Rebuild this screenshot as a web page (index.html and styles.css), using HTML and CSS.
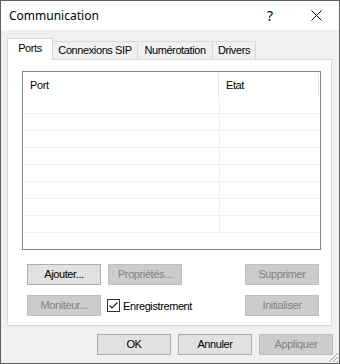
FILE: index.html
```html
<!DOCTYPE html>
<html>

<head>
    <link rel="stylesheet" href="styles.css">
</head>

<body>
    <div class="window">
        <div class="titlebar">
            <span class="title">Communication</span>
            <span class="tb-btn help">?</span>
            <span class="tb-btn close">
                <svg width="11" height="11" viewBox="0 0 11 11">
                    <path d="M0.5 0.5L10.5 10.5M10.5 0.5L0.5 10.5" stroke="#000" stroke-width="1" fill="none"/>
                </svg>
            </span>
        </div>
        <div class="content">
            <div class="tabs">
                <div class="tab active tab-ports">Ports</div>
                <div class="tab tab-sip">Connexions SIP</div>
                <div class="tab tab-num">Numérotation</div>
                <div class="tab tab-drv">Drivers</div>
            </div>
            <div class="panel">
                <div class="list">
                    <div class="list-head">
                        <div class="head-cell col-port">Port</div>
                        <div class="head-cell col-etat">Etat</div>
                    </div>
                    <div class="row"><div class="cell c1"></div><div class="cell c2"></div></div>
                    <div class="row"><div class="cell c1"></div><div class="cell c2"></div></div>
                    <div class="row"><div class="cell c1"></div><div class="cell c2"></div></div>
                    <div class="row"><div class="cell c1"></div><div class="cell c2"></div></div>
                    <div class="row"><div class="cell c1"></div><div class="cell c2"></div></div>
                    <div class="row"><div class="cell c1"></div><div class="cell c2"></div></div>
                    <div class="row"><div class="cell c1"></div><div class="cell c2"></div></div>
                    <div class="row"><div class="cell c1"></div><div class="cell c2"></div></div>
                </div>
                <div class="actions">
                    <div class="btn-row">
                        <div class="btn">Ajouter...</div>
                        <div class="btn disabled">Propriétés...</div>
                        <div class="btn disabled push">Supprimer</div>
                    </div>
                    <div class="btn-row second">
                        <div class="btn disabled">Moniteur...</div>
                        <label class="check">
                            <span class="box">
                                <svg width="11" height="11" viewBox="0 0 11 11">
                                    <path d="M1.5 5.5L4 8L9.5 2.5" stroke="#222" stroke-width="1.1" fill="none"/>
                                </svg>
                            </span>
                            Enregistrement
                        </label>
                        <div class="btn disabled push">Initialiser</div>
                    </div>
                </div>
            </div>
            <div class="footer">
                <div class="btn">OK</div>
                <div class="btn">Annuler</div>
                <div class="btn disabled">Appliquer</div>
            </div>
        </div>
        <svg class="grip" width="12" height="12" viewBox="0 0 12 12">
            <rect x="10" y="2" width="1" height="1" fill="#a6a6a6"/>
            <rect x="9" y="3" width="1" height="1" fill="#a6a6a6"/>
            <rect x="8" y="4" width="1" height="1" fill="#a6a6a6"/>
            <rect x="7" y="5" width="1" height="1" fill="#a6a6a6"/>
            <rect x="6" y="6" width="1" height="1" fill="#a6a6a6"/>
            <rect x="5" y="7" width="1" height="1" fill="#a6a6a6"/>
            <rect x="4" y="8" width="1" height="1" fill="#a6a6a6"/>
            <rect x="3" y="9" width="1" height="1" fill="#a6a6a6"/>
            <rect x="2" y="10" width="1" height="1" fill="#a6a6a6"/>
            <rect x="10" y="6" width="1" height="1" fill="#a6a6a6"/>
            <rect x="9" y="7" width="1" height="1" fill="#a6a6a6"/>
            <rect x="8" y="8" width="1" height="1" fill="#a6a6a6"/>
            <rect x="7" y="9" width="1" height="1" fill="#a6a6a6"/>
            <rect x="6" y="10" width="1" height="1" fill="#a6a6a6"/>
            <rect x="10" y="10" width="1" height="1" fill="#a6a6a6"/>
        </svg>
    </div>
</body>

</html>
```

FILE: styles.css
```css
* {
    padding: 0;
    margin: 0;
    box-sizing: border-box;
}

body {
    background: #f0f0f0;
}

.window {
    position: relative;
    width: 340px;
    height: 364px;
    border: 1px solid #5f5f5f;
    background: #f0f0f0;
    font-family: "Liberation Sans", Arial, sans-serif;
    font-size: 11px;
    letter-spacing: -0.4px;
    color: #000;
}

/* barre de titre */
.titlebar {
    height: 29px;
    background: #fff;
    display: flex;
    align-items: center;
}

.title {
    flex: 1;
    padding-left: 8px;
    font-family: "Noto Sans", sans-serif;
    font-size: 12px;
    letter-spacing: 0;
}

.tb-btn {
    width: 46px;
    height: 29px;
    display: flex;
    align-items: center;
    justify-content: center;
}

.help {
    font-family: "Noto Sans", sans-serif;
    font-size: 14px;
    letter-spacing: 0;
}

.close svg {
    display: block;
}

.content {
    padding: 8px 6px 0 6px;
}

/* onglets */
.tabs {
    display: flex;
    align-items: flex-end;
    height: 21px;
}

.tab {
    height: 18px;
    border: 1px solid #d9d9d9;
    border-bottom: none;
    background: #f0f0f0;
    margin-left: -1px;
    text-align: center;
    line-height: 16px;
    white-space: nowrap;
}

.tab.active {
    position: relative;
    z-index: 1;
    height: 22px;
    margin-bottom: -1px;
    margin-left: 0;
    background: #fff;
    line-height: 18px;
}

.tab-ports {
    width: 46px;
}

.tab-sip {
    width: 86px;
}

.tab-num {
    width: 76px;
}

.tab-drv {
    width: 44px;
}

.panel {
    width: 325px;
    height: 267px;
    border: 1px solid #d9d9d9;
    background: #fff;
    padding: 11px 0 0 14px;
}

/* liste des ports */
.list {
    width: 299px;
    height: 179px;
    border: 1px solid #828790;
}

.list-head {
    display: flex;
    height: 25px;
}

.head-cell {
    padding-left: 7px;
    line-height: 24px;
    border-right: 1px solid #e5e5e5;
    margin: 1px 0 0;
}

.col-port {
    width: 196px;
}

.col-etat {
    width: 100px;
}

.row {
    display: flex;
    width: 295px;
    height: 17px;
    margin-left: 1px;
    border-bottom: 1px solid #f0f0f0;
}

.c1 {
    width: 196px;
    border-right: 1px solid #f0f0f0;
}

.c2 {
    flex: 1;
}

/* boutons */
.actions {
    margin: 14px 12px 0 5px;
}

.btn-row {
    display: flex;
    align-items: center;
    gap: 7px;
}

.btn-row.second {
    margin-top: 10px;
}

.btn {
    width: 74px;
    height: 21px;
    border: 1px solid #adadad;
    background: #e1e1e1;
    text-align: center;
    line-height: 19px;
    white-space: nowrap;
}

.btn.disabled {
    border-color: #bfbfbf;
    background: #cccccc;
    color: #838383;
}

.push {
    margin-left: auto;
}

.check {
    display: flex;
    align-items: center;
    gap: 3px;
    margin-left: -1px;
}

.box {
    width: 13px;
    height: 13px;
    border: 1px solid #333;
    background: #fff;
}

.box svg {
    display: block;
}

.footer {
    display: flex;
    justify-content: flex-end;
    gap: 7px;
    margin-top: 8px;
}

.grip {
    position: absolute;
    right: 0;
    bottom: 0;
}
```
